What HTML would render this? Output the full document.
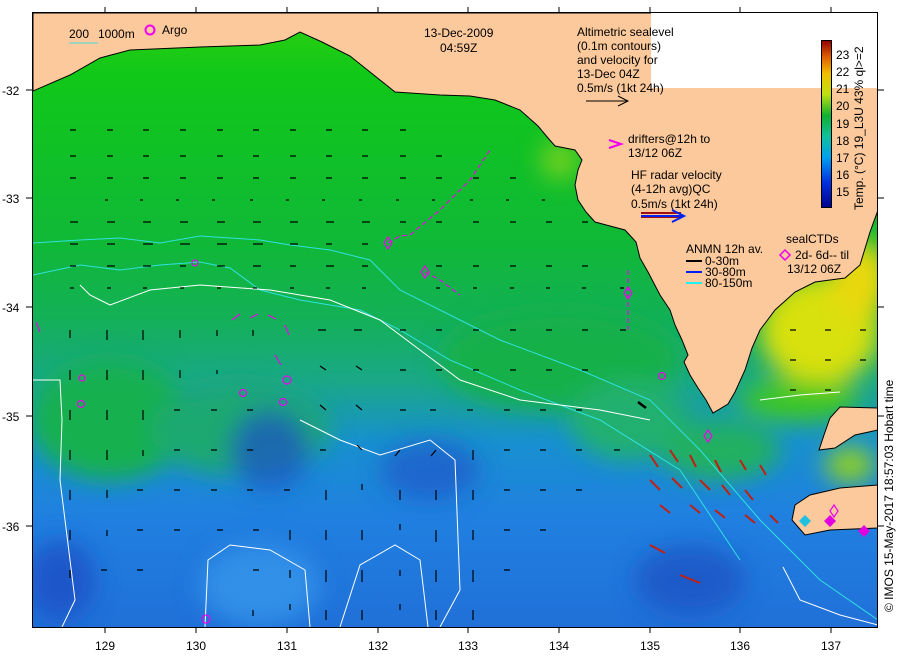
<!DOCTYPE html>
<html><head><meta charset="utf-8"><style>
html,body{margin:0;padding:0;background:#fff;width:900px;height:660px;overflow:hidden}
svg{display:block}
text{font-family:"Liberation Sans",sans-serif;font-size:12px;fill:#000}
</style></head><body>
<svg width="900" height="660" viewBox="0 0 900 660">
<defs>
<linearGradient id="w" x1="0" y1="0" x2="0" y2="1">
<stop offset="0" stop-color="#30d010"/>
<stop offset="0.1" stop-color="#10c818"/>
<stop offset="0.38" stop-color="#10b838"/>
<stop offset="0.5" stop-color="#14b058"/>
<stop offset="0.6" stop-color="#1aa888"/>
<stop offset="0.7" stop-color="#1890d0"/>
<stop offset="0.82" stop-color="#2080e0"/>
<stop offset="1" stop-color="#2070d8"/>
</linearGradient>
<linearGradient id="cb" x1="0" y1="1" x2="0" y2="0">
<stop offset="0" stop-color="#00008a"/>
<stop offset="0.15" stop-color="#0030e0"/>
<stop offset="0.3" stop-color="#00a0f0"/>
<stop offset="0.42" stop-color="#10c0a0"/>
<stop offset="0.55" stop-color="#10b030"/>
<stop offset="0.68" stop-color="#c0e010"/>
<stop offset="0.8" stop-color="#f0c000"/>
<stop offset="0.9" stop-color="#e06000"/>
<stop offset="1" stop-color="#900000"/>
</linearGradient>
<filter id="bl"><feGaussianBlur stdDeviation="12"/></filter>
<clipPath id="fr"><rect x="33" y="13" width="845" height="614"/></clipPath>
</defs>
<g clip-path="url(#fr)">
<rect x="33" y="13" width="845" height="614" fill="url(#w)"/>
<g filter="url(#bl)">
<ellipse cx="110" cy="420" rx="80" ry="60" fill="#14b050"/>
<ellipse cx="240" cy="430" rx="90" ry="45" fill="#1aa870"/>
<ellipse cx="560" cy="360" rx="120" ry="50" fill="#14b048"/>
<ellipse cx="630" cy="420" rx="60" ry="40" fill="#20b070"/>
<ellipse cx="270" cy="450" rx="40" ry="40" fill="#2050c8" opacity="0.7"/>
<ellipse cx="60" cy="580" rx="35" ry="40" fill="#2048c0" opacity="0.7"/>
<ellipse cx="430" cy="470" rx="50" ry="30" fill="#2050c8" opacity="0.6"/>
<ellipse cx="690" cy="580" rx="55" ry="35" fill="#2050c0" opacity="0.7"/>
<ellipse cx="260" cy="585" rx="60" ry="40" fill="#3090e8"/>
<ellipse cx="820" cy="330" rx="60" ry="55" fill="#d8e010"/>
<ellipse cx="860" cy="280" rx="30" ry="40" fill="#e8d808"/>
<ellipse cx="800" cy="400" rx="60" ry="20" fill="#40c820"/>
<ellipse cx="850" cy="465" rx="25" ry="18" fill="#90d020"/>
<ellipse cx="720" cy="450" rx="60" ry="30" fill="#20b060"/>
<ellipse cx="560" cy="160" rx="20" ry="20" fill="#70d020"/>
</g>
<!-- land -->
<path fill="#fbc99b" stroke="#000" stroke-width="1" d="M33,13 H878 V210 L870,232 L860,265 L845,278 L815,282 L795,292 L775,310 L760,330 L752,348 L745,370 L735,392 L728,404 L713,413 L706,400 L698,388 L690,375 L684,362 L688,355 L682,340 L675,325 L670,310 L660,295 L648,272 L640,258 L636,242 L625,230 L610,226 L595,222 L586,212 L578,200 L575,185 L578,170 L582,160 L575,150 L555,146 L548,138 L538,126 L520,110 L505,104 L495,100 L470,96 L440,95 L410,93 L395,92 L380,80 L350,56 L322,42 L300,32 L285,40 L260,45 L200,47 L130,50 L100,58 L70,75 L33,91 Z"/>
<path fill="#fbc99b" stroke="#000" d="M878,408 L840,407 L830,418 L824,435 L819,450 L835,448 L855,435 L878,430 Z"/>
<path fill="#fbc99b" stroke="#000" d="M878,485 L840,488 L810,495 L795,505 L792,520 L805,535 L830,530 L878,528 Z"/>
<rect x="651" y="13" width="227" height="75" fill="#fff"/>
<!-- contours -->
<g fill="none" stroke="#30e0e0" stroke-width="1">
<path d="M33,243 L80,240 L120,238 L160,243 L200,236 L260,240 L290,245 L330,250 L370,260 L400,290 L440,310 L500,340 L580,370 L650,400 L700,450 L760,520 L820,580 L878,620"/>
<path d="M33,275 L80,265 L120,270 L160,265 L200,262 L230,268 L260,290 L300,300 L360,310 L400,330 L450,360 L520,390 L600,420 L680,470 L740,560"/>
</g>
<g fill="none" stroke="#fff" stroke-width="1">
<path d="M110,305 L150,290 L200,285 L270,290 L330,300 L380,320 L420,350 L460,380 L520,400 L600,410 L650,420"/>
<path d="M33,380 L60,380 L62,420 L60,480 L70,560 L75,600 L62,627"/>
<path d="M110,305 L90,295 L80,285"/>
<path d="M205,627 L208,560 L230,545 L270,550 L305,570 L310,627"/>
<path d="M340,627 L360,565 L395,545 L420,560 L428,627"/>
<path d="M440,627 L460,590 L455,460 L430,440 L380,455 L340,440 L300,420"/>
<path d="M760,400 L800,395 L840,392"/>
<path d="M783,567 L800,600 L840,615 L878,625"/>
</g>
<g stroke="#000" stroke-width="1.2">
<path d="M70,130h6M107,130h6M143,130h6M180,130h6M217,130h6M253,130h6M290,130h6M326,130h6M362,130h6M400,130h6M70,156h6M107,156h6M143,156h6M180,156h6M217,156h6M253,156h6M290,156h6M326,156h6M362,156h6M400,156h6M436,156h6M70,178h6M107,178h6M143,178h6M180,178h6M217,178h6M253,178h6M290,178h6M326,178h6M362,178h6M400,178h6M436,178h6M473,178h6M510,178h6M105,200h3M140,200h3M176,200h3M212,200h3M250,200h3M286,200h3M322,200h3M359,200h3M396,200h3M432,200h3M470,200h3M506,200h3M542,200h3M70,222h8M107,222h8M143,222h8M180,222h8M217,222h8M253,222h8M290,222h8M326,222h8M362,222h8M400,222h6M436,222h6M473,222h6M510,222h6M546,222h6M582,222h6M70,244h8M107,244h8M143,244h10M180,244h10M217,244h10M253,244h10M290,244h8M326,244h6M362,244h6M70,266h6M107,266h8M143,266h8M180,266h6M217,266h8M253,266h8M290,266h6M326,266h8M362,266h6M436,266h6M473,266h6M510,266h6M546,266h6M582,266h6M70,288h4M107,288h4M143,288h4M180,288h4M217,288h4M253,288h4M290,288h4M326,288h4M362,288h4M436,288h4M473,288h4M510,288h4M546,288h4M582,288h4M620,288h4"/>
<path d="M70,330v8M107,330v10M143,330v10M180,330v8M217,330v6M253,330v6M326,330h-8M362,330h-8M400,330h6M436,330h6M473,330h6M510,330h6M546,330h6M582,330h6M620,330h6M70,370v10M107,370v10M143,370v10M180,370v8M217,370v4M326,370l-6,-4M362,370l-6,-4M400,370h6M436,370h6M473,370h6M510,370h6M546,370h6M582,370h6M70,410v10M107,410v10M143,410v10M180,410h-6M217,410h-6M253,410h-6M326,410l-6,-5M362,410l-6,-5M400,410h6M436,410h-6M473,410h-6M510,410h-6M546,410h-6M582,410h-6M70,450v10M107,450v10M143,450v6M180,450h-6M217,450h-6M253,450h-6M326,450h-6M362,450l-5,-5M400,450l-5,6M436,450l-5,6M473,450v10M510,450h-6M546,450h-6M582,450h-6M620,450h-6M70,490v10M107,490v8M143,490h-6M180,490h-6M217,490h-6M253,490h-6M290,490h-6M326,490v10M362,490v-6M400,490v10M436,490v10M473,490v10M510,490h-6M546,490h-6M582,490h-6M70,530v10M107,530v6M143,530h-6M180,530h-6M217,530h6M253,530h6M290,530v10M326,530v10M362,530v10M400,530v-6M436,530v12M473,530v10M510,530h-6M546,530h-6M70,570v8M107,570h-6M143,570h-6M253,570h6M290,570v8M326,570v12M362,570v12M400,570v6M436,570v12M473,570v12M510,570h-6M253,610v6M290,610v-6M326,610v10M362,610v10M400,610v-6M436,610v10M473,610v10M790,330h6M825,330h6M860,330h6M790,360h6M825,360h6M860,360h6M790,390h6M825,390h6"/>
<path d="M638,402l8,6" stroke-width="2.5"/>
</g>
<g stroke="#c02010" stroke-width="2">
<path d="M650,455l8,12M670,450l8,12M690,455l6,12M715,460l6,12M740,460l6,10M760,465l6,10M650,480l10,10M672,478l10,10M700,480l10,10M722,485l8,10M745,490l8,10M660,505l10,8M690,505l10,8M715,510l10,8M745,515l10,8M770,515l8,8M650,545l15,8M680,575l20,8"/>
</g>
<g fill="none" stroke="#f000f0" stroke-width="1.2">
<path d="M388,243 L400,236 L410,235 L440,210 L470,180 L490,150" stroke-dasharray="5,3"/>
<path d="M425,272 L440,280 L460,295" stroke-dasharray="5,3"/>
<path d="M628,270 L628,330" stroke-dasharray="5,3"/>
<circle cx="81" cy="404" r="3.5"/><circle cx="82" cy="378" r="3"/><circle cx="195" cy="263" r="3"/><circle cx="243" cy="393" r="3.5"/><circle cx="283" cy="402" r="3.5"/><circle cx="287" cy="380" r="4"/><circle cx="206" cy="619" r="4"/><circle cx="662" cy="376" r="3.5"/>
<path d="M388,237l4,6-4,6-4-6z M425,266l4,6-4,6-4-6z M628,287l4,6-4,6-4-6z M708,430l4,6-4,6-4-6z M834,505l4,6-4,6-4-6z"/>
<path d="M232,320l8,-6 M250,318l8,-4 M268,315l8,4 M285,325l4,10 M275,355l6,10 M36,322l4,10"/>
</g>
<g fill="#e000e0"><path d="M830,515l6,6-6,6-6-6z M864,525l6,6-6,6-6-6z"/></g>
<g fill="#20c0e0"><path d="M805,515l6,6-6,6-6-6z"/></g>
</g>
<rect x="32.5" y="12.5" width="845" height="615" fill="none" stroke="#000"/>
<g stroke="#000">
<path d="M105,7v6M196,7v6M287,7v6M378,7v6M468,7v6M559,7v6M650,7v6M740,7v6M831,7v6"/>
<path d="M105,627v6M196,627v6M287,627v6M378,627v6M468,627v6M559,627v6M650,627v6M740,627v6M831,627v6"/>
<path d="M26,90h6M26,198h6M26,307h6M26,416h6M26,526h6"/>
<path d="M878,90h6M878,198h6M878,307h6M878,416h6M878,526h6"/>
</g>
<g font-size="12">
<text x="2" y="95">-32</text><text x="2" y="203">-33</text><text x="2" y="312">-34</text><text x="2" y="421">-35</text><text x="2" y="531">-36</text>
<text x="95" y="650">129</text><text x="186" y="650">130</text><text x="277" y="650">131</text><text x="368" y="650">132</text><text x="458" y="650">133</text><text x="549" y="650">134</text><text x="640" y="650">135</text><text x="730" y="650">136</text><text x="821" y="650">137</text>
</g>
<text x="69" y="38">200</text><text x="98" y="38">1000m</text>
<line x1="69" y1="43" x2="98" y2="43" stroke="#40e0e0"/>
<circle cx="150" cy="30" r="4.5" fill="none" stroke="#f000f0" stroke-width="2"/>
<text x="162" y="34">Argo</text>
<text x="424" y="37">13-Dec-2009</text>
<text x="440" y="52">04:59Z</text>
<text x="577" y="36">Altimetric sealevel</text>
<text x="577" y="50">(0.1m contours)</text>
<text x="577" y="64">and velocity for</text>
<text x="577" y="78">13-Dec 04Z</text>
<text x="577" y="92">0.5m/s (1kt 24h)</text>
<path d="M586,101h42M618,96l10,5-10,5" stroke="#000" fill="none"/>
<path d="M609,140l12,4-12,4" stroke="#f000f0" stroke-width="2" fill="none"/>
<text x="628" y="143">drifters@12h to</text>
<text x="628" y="157">13/12 06Z</text>
<text x="631" y="179">HF radar velocity</text>
<text x="631" y="193">(4-12h avg)QC</text>
<text x="631" y="208">0.5m/s (1kt 24h)</text>
<path d="M641,213h40M641,217h40" stroke="#a01010" stroke-width="2"/>
<path d="M641,216h42M672,210l12,6-12,6" stroke="#0020f0" stroke-width="2" fill="none"/>
<text x="686" y="253">ANMN 12h av.</text>
<text x="705" y="265">0-30m</text><text x="705" y="276">30-80m</text><text x="705" y="287">80-150m</text>
<path d="M686,261h16" stroke="#000" stroke-width="2"/><path d="M686,272h16" stroke="#0020f0" stroke-width="2"/><path d="M686,283h16" stroke="#20f0f0" stroke-width="2"/>
<text x="786" y="243">sealCTDs</text>
<path d="M785,250l5,5-5,5-5-5z" fill="none" stroke="#f000f0" stroke-width="1.5"/>
<text x="795" y="259">2d- 6d-- til</text>
<text x="787" y="273">13/12 06Z</text>
<rect x="821.5" y="40.5" width="10" height="167" fill="url(#cb)" stroke="#000"/>
<g font-size="11">
<text x="836" y="59">23</text><text x="836" y="76">22</text><text x="836" y="93">21</text><text x="836" y="110">20</text><text x="836" y="128">19</text><text x="836" y="145">18</text><text x="836" y="162">17</text><text x="836" y="179">16</text><text x="836" y="196">15</text>
</g>
<text transform="translate(863,210) rotate(-90)" font-size="11">Temp. (°C) 19_L3U 43% ql&gt;=2</text>
<text transform="translate(893,612) rotate(-90)" font-size="11">© IMOS 15-May-2017 18:57:03 Hobart time</text>
</svg>
</body></html>
